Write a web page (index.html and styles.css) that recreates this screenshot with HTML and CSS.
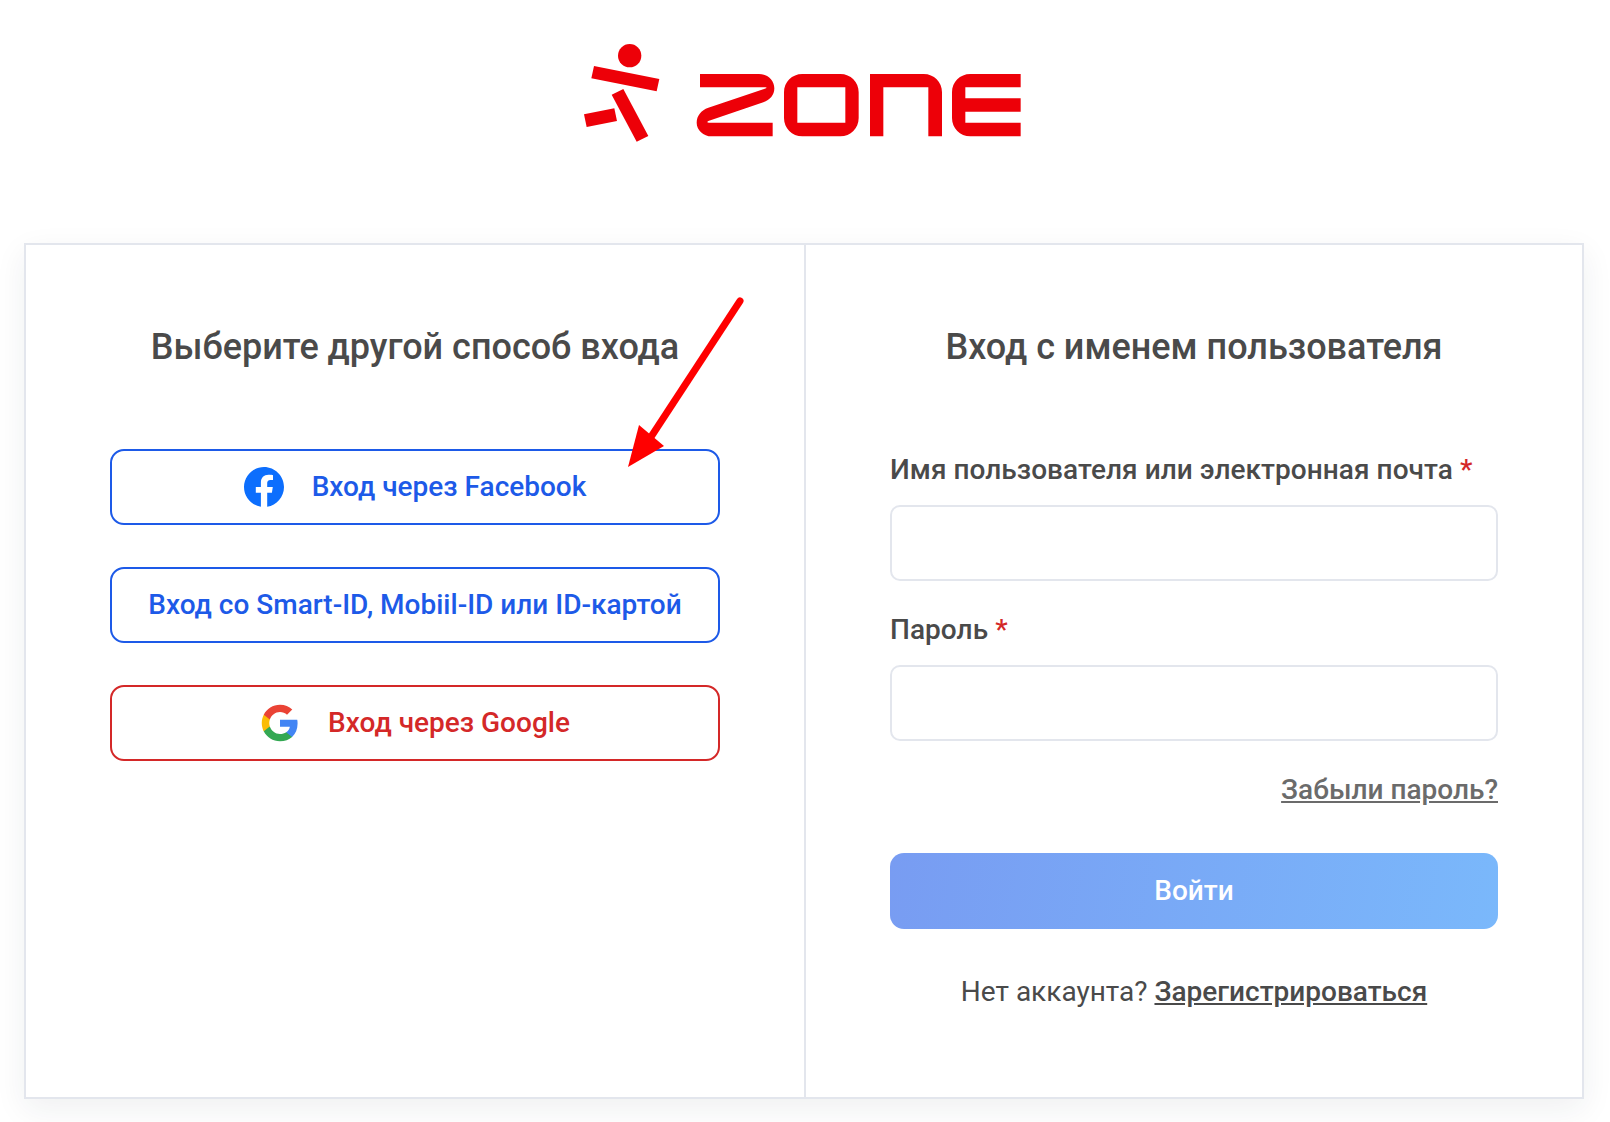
FILE: index.html
```html
<!DOCTYPE html>
<html lang="ru">
<head>
<meta charset="utf-8">
<title>Zone</title>
<link rel="stylesheet" href="styles.css">
</head>
<body>
<header class="logo-row">
  <svg class="logo" viewBox="15 0 1440 420" aria-label="Zone">
    <g fill="#ed0008">
      <circle cx="209" cy="107" r="35"/>
      <polygon points="102,138 298,177 290,214 94,175"/>
      <polygon points="155,224 190,207 265,348 230,365"/>
      <polygon points="72,283 163,265 171,303 80,321"/>
      <path d="M420 162H597C625 162 643 182 643 205C643 225 630 240 610 247L445 303C441 305 441 308 446 308H638V349H455C430 349 410 330 410 308C410 287 423 271 445 263L618 205C621 204 620 202 616 202H420Z"/>
      <path fill-rule="evenodd" d="M727 162H841C872 162 896 186 896 217V294C896 325 872 349 841 349H727C696 349 672 325 672 294V217C672 186 696 162 727 162ZM712 202V308H856V202Z"/>
      <path d="M930 349V162H1091C1122 162 1146 186 1146 217V349H1105V202H970V349Z"/>
      <path d="M1382 162H1231C1200 162 1176 186 1176 217V294C1176 325 1200 349 1231 349H1382V308H1216V275H1382V235H1216V202H1382Z"/>
    </g>
  </svg>
</header>
<main class="card">
  <section class="panel panel-left">
    <h2 class="title">Выберите другой способ входа</h2>
    <div class="providers">
      <a class="provider provider-blue" href="#">
        <svg class="icon-fb" viewBox="0 0 40 40"><path fill="#0c6efd" d="M40 20C40 9 31 0 20 0S0 9 0 20c0 10 7.3 18.3 16.9 19.8v-14h-5.1V20h5.1v-4.4c0-5 3-7.8 7.6-7.8 2.2 0 4.5.4 4.5.4v4.9h-2.5c-2.5 0-3.3 1.5-3.3 3.1V20h5.6l-.9 5.8h-4.7v14C32.7 38.3 40 30 40 20z"/></svg>
        <span>Вход через Facebook</span>
      </a>
      <a class="provider provider-blue" href="#"><span>Вход со Smart-ID, Mobiil-ID или ID-картой</span></a>
      <a class="provider provider-red" href="#">
        <svg class="icon-g" viewBox="0 0 48 48">
          <path fill="#4285f4" d="M45.1 24.5c0-1.6-.1-3.100-.4-4.500H24v8.500h11.800c-.5 2.800-2.100 5.100-4.400 6.700v5.500h7.100c4.200-3.900 6.600-9.500 6.600-16.200z"/>
          <path fill="#34a853" d="M24 46c5.900 0 10.900-2 14.500-5.300l-7.100-5.500c-2 1.300-4.500 2.100-7.400 2.100-5.700 0-10.500-3.800-12.200-9H4.500v5.700C8.100 41.100 15.500 46 24 46z"/>
          <path fill="#fbbc05" d="M11.800 28.300c-.4-1.300-.7-2.800-.7-4.300s.3-3 .7-4.300V14H4.500C3 17 2.100 20.400 2.100 24s.9 7 2.400 10l7.300-5.700z"/>
          <path fill="#ea4335" d="M24 10.700c3.200 0 6.100 1.100 8.400 3.300l6.300-6.300C34.900 4.200 29.900 2 24 2 15.500 2 8.100 6.900 4.500 14l7.300 5.700c1.700-5.200 6.500-9 12.200-9z"/>
        </svg>
        <span>Вход через Google</span>
      </a>
    </div>
  </section>
  <section class="panel">
    <h2 class="title">Вход с именем пользователя</h2>
    <form class="form">
      <label class="label" for="user">Имя пользователя или электронная почта <span class="req">*</span></label>
      <input class="input" id="user" type="text">
      <label class="label label-next" for="pass">Пароль <span class="req">*</span></label>
      <input class="input" id="pass" type="password">
      <a class="forgot" href="#">Забыли пароль?</a>
      <button class="submit" type="button">Войти</button>
      <p class="signup">Нет аккаунта? <a href="#">Зарегистрироваться</a></p>
    </form>
  </section>
</main>
<svg class="arrow" viewBox="0 0 140 180" aria-hidden="true">
  <line x1="117" y1="8" x2="24" y2="150" stroke="#ff0000" stroke-width="7" stroke-linecap="round"/>
  <polygon points="5,174 16,132 41,153" fill="#ff0000"/>
</svg>
</body>
</html>
```

FILE: styles.css
```css
* { box-sizing: border-box; }

html, body { margin: 0; padding: 0; background: #fff; }

body {
  position: relative;
  font-family: Roboto, "Liberation Sans", sans-serif;
  color: #4a4a4a;
  min-height: 1122px;
}

.logo-row {
  display: flex;
  justify-content: center;
  padding-top: 20px;
  margin-bottom: 83px;
}

.logo { display: block; width: 480px; height: 140px; }

.card {
  display: grid;
  grid-template-columns: calc(50% + 2px) 1fr;
  margin: 0 26px 0 24px;
  border: 2px solid #e3e6ed;
  background: #fff;
  box-shadow: 0 10px 30px rgba(30, 40, 60, 0.07);
}

.panel { padding: 82px 84px 88px; }

.panel-left { border-right: 2px solid #e3e6ed; }

.title {
  margin: 0 0 82px;
  font-size: 36px;
  line-height: 40px;
  font-weight: 500;
  text-align: center;
  color: #4a4a4a;
}

.providers { display: flex; flex-direction: column; gap: 42px; }

.provider {
  display: flex;
  align-items: center;
  justify-content: center;
  height: 76px;
  padding-bottom: 2px;
  border: 2px solid;
  border-radius: 14px;
  font-size: 28px;
  font-weight: 500;
  text-decoration: none;
}

.provider-blue { border-color: #1d5ae8; color: #1d5ae8; }
.provider-red { border-color: #d42828; color: #d42828; }

.icon-fb { width: 40px; height: 40px; margin-top: 2px; margin-right: 28px; }
.icon-g { width: 40px; height: 40px; margin-top: 2px; margin-right: 28px; }

.form { display: flex; flex-direction: column; padding-top: 4px; }

.label {
  display: block;
  font-size: 28px;
  line-height: 34px;
  font-weight: 500;
  letter-spacing: 0.05px;
  margin-bottom: 18px;
}

.label-next { margin-top: 32px; }

.req { color: #d42828; }

.input {
  display: block;
  width: 100%;
  height: 76px;
  border: 2px solid #e3e6ed;
  border-radius: 10px;
  background: #fff;
}

.forgot {
  align-self: flex-end;
  margin-top: 32px;
  font-size: 28px;
  line-height: 34px;
  font-weight: 500;
  color: #6b6b6b;
}

.submit {
  height: 76px;
  margin-top: 46px;
  padding: 0 0 2px;
  border: 0;
  border-radius: 14px;
  background: linear-gradient(100deg, #789cf2, #7ab8fb);
  color: #fff;
  font-family: inherit;
  font-size: 28px;
  font-weight: 500;
}

.signup {
  margin: 46px 0 0;
  font-size: 28px;
  line-height: 34px;
  text-align: center;
}

.signup a { color: #4a4a4a; font-weight: 500; }

.arrow {
  position: absolute;
  left: 623px;
  top: 293px;
  width: 140px;
  height: 180px;
}
```
